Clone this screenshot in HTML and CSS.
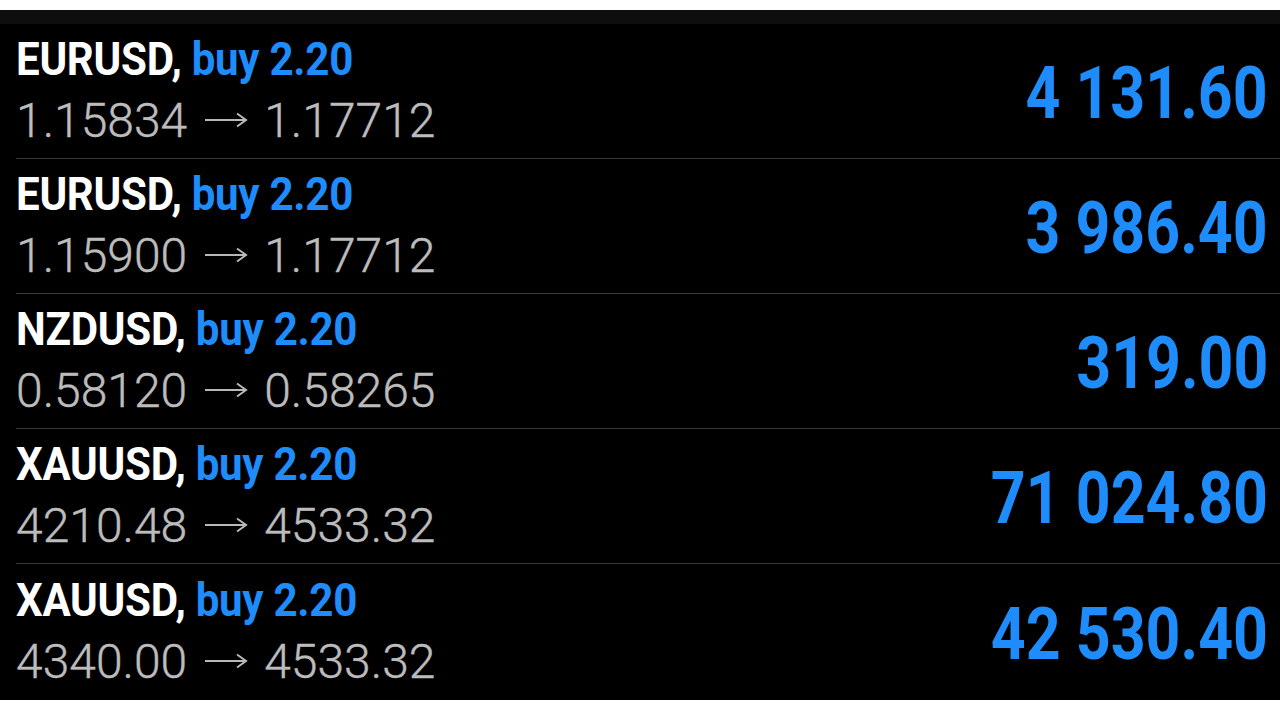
FILE: index.html
```html
<!DOCTYPE html>
<html>
<head>
<meta charset="utf-8">
<link rel="stylesheet" href="styles.css">
</head>
<body>
<div class="screen">
  <div class="topbar"></div>
  <div class="list">
    <div class="row">
      <div class="info">
        <div class="title"><span class="sym">EURUSD,</span> <span class="side">buy 2.20</span></div>
        <div class="prices">1.15834<svg class="arrow" viewBox="0 0 44 16" width="44" height="16"><path d="M1 8H42M33 1.5L42 8L33 14.5" fill="none" stroke="#b8b8b8" stroke-width="2"/></svg>1.17712</div>
      </div>
      <div class="profit">4 131.60</div>
    </div>
    <div class="row">
      <div class="info">
        <div class="title"><span class="sym">EURUSD,</span> <span class="side">buy 2.20</span></div>
        <div class="prices">1.15900<svg class="arrow" viewBox="0 0 44 16" width="44" height="16"><path d="M1 8H42M33 1.5L42 8L33 14.5" fill="none" stroke="#b8b8b8" stroke-width="2"/></svg>1.17712</div>
      </div>
      <div class="profit">3 986.40</div>
    </div>
    <div class="row">
      <div class="info">
        <div class="title"><span class="sym">NZDUSD,</span> <span class="side">buy 2.20</span></div>
        <div class="prices">0.58120<svg class="arrow" viewBox="0 0 44 16" width="44" height="16"><path d="M1 8H42M33 1.5L42 8L33 14.5" fill="none" stroke="#b8b8b8" stroke-width="2"/></svg>0.58265</div>
      </div>
      <div class="profit">319.00</div>
    </div>
    <div class="row">
      <div class="info">
        <div class="title"><span class="sym">XAUUSD,</span> <span class="side">buy 2.20</span></div>
        <div class="prices">4210.48<svg class="arrow" viewBox="0 0 44 16" width="44" height="16"><path d="M1 8H42M33 1.5L42 8L33 14.5" fill="none" stroke="#b8b8b8" stroke-width="2"/></svg>4533.32</div>
      </div>
      <div class="profit">71 024.80</div>
    </div>
    <div class="row last">
      <div class="info">
        <div class="title"><span class="sym">XAUUSD,</span> <span class="side">buy 2.20</span></div>
        <div class="prices">4340.00<svg class="arrow" viewBox="0 0 44 16" width="44" height="16"><path d="M1 8H42M33 1.5L42 8L33 14.5" fill="none" stroke="#b8b8b8" stroke-width="2"/></svg>4533.32</div>
      </div>
      <div class="profit">42 530.40</div>
    </div>
  </div>
</div>
</body>
</html>
```
FILE: styles.css
```css
html, body {
  margin: 0;
  padding: 0;
  background: #ffffff;
}
.screen {
  width: 1280px;
  height: 720px;
  padding-top: 10px;
  box-sizing: border-box;
  background: #ffffff;
}
.topbar {
  height: 14px;
  background: #0e0e0e;
}
.list {
  background: #000000;
  display: flex;
  flex-direction: column;
}
.row {
  height: 135px;
  box-sizing: border-box;
  margin-left: 16px;
  padding-right: 12px;
  border-bottom: 1px solid #3a3a3a;
  display: flex;
  align-items: center;
  justify-content: space-between;
}
.row.last {
  border-bottom: none;
  height: 136px;
}
.info {
  display: flex;
  flex-direction: column;
  padding-top: 1px;
}
.title {
  font-family: Roboto, "Liberation Sans", sans-serif;
  font-weight: 700;
  font-size: 46px;
  line-height: 50px;
  color: #ffffff;
  white-space: nowrap;
  transform: scaleX(0.915);
  transform-origin: left center;
  letter-spacing: -0.3px;
}
.side {
  color: #1e8cfa;
}
.prices {
  font-family: Roboto, "Liberation Sans", sans-serif;
  font-weight: 300;
  font-size: 48px;
  line-height: 56px;
  margin-top: 9px;
  color: #bcbcbc;
  white-space: nowrap;
  display: flex;
  align-items: center;
  -webkit-text-stroke: 0.4px #bcbcbc;
}
.arrow {
  margin: 0 16px 3px 17px;
}
.profit {
  font-family: Roboto, "Liberation Sans", sans-serif;
  font-weight: 700;
  font-size: 72px;
  line-height: 80px;
  padding-top: 5px;
  color: #1e8cfa;
  white-space: nowrap;
  transform: scaleX(0.845);
  transform-origin: right center;
}
```
